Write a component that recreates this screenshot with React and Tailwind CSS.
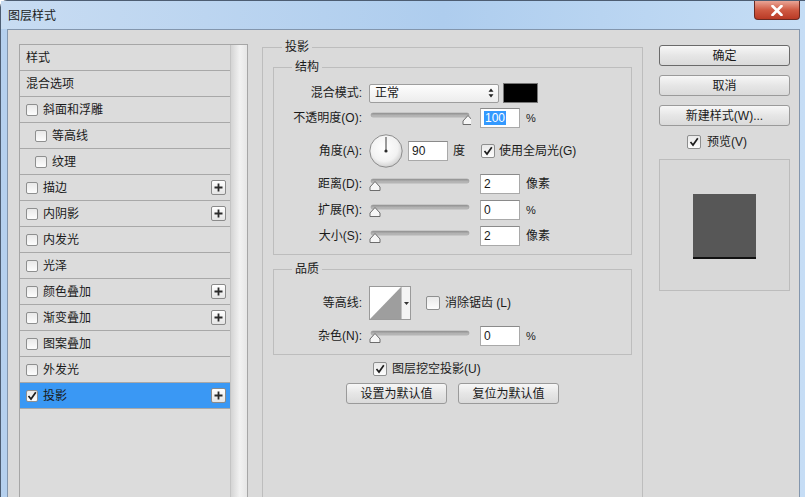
import React from "react"

const rows = [
  { t: "样式" },
  { t: "混合选项" },
  { t: "斜面和浮雕", cb: true },
  { t: "等高线", cb: true, indent: true },
  { t: "纹理", cb: true, indent: true },
  { t: "描边", cb: true, plus: true },
  { t: "内阴影", cb: true, plus: true },
  { t: "内发光", cb: true },
  { t: "光泽", cb: true },
  { t: "颜色叠加", cb: true, plus: true },
  { t: "渐变叠加", cb: true, plus: true },
  { t: "图案叠加", cb: true },
  { t: "外发光", cb: true },
  { t: "投影", cb: true, checked: true, plus: true, sel: true },
]

function Check({ checked, small }) {
  const size = small ? "w-[12px] h-[12px]" : "w-[14px] h-[14px]"
  return (
    <span
      className={`${size} shrink-0 inline-flex items-center justify-center border border-[#8e8f8f] rounded-[2px] bg-[linear-gradient(#e9e9e9,#fdfdfd)]`}
    >
      {checked && (
        <svg width="10" height="10" viewBox="0 0 10 10">
          <path d="M1.5 5 L4 8 L8.8 1.2" stroke="#1d1d1d" strokeWidth="1.7" fill="none" />
        </svg>
      )}
    </span>
  )
}

function Plus() {
  return (
    <span className="w-[15px] h-[15px] flex items-center justify-center border border-[#8a8a8a] rounded-[2px] bg-[linear-gradient(#ffffff,#e4e4e4)]">
      <svg width="9" height="9" viewBox="0 0 9 9">
        <path d="M4.5 0.5 V8.5 M0.5 4.5 H8.5" stroke="#2a2a2a" strokeWidth="1.8" />
      </svg>
    </span>
  )
}

function Slider({ pos }) {
  const cx = pos
  return (
    <svg width="102" height="20" viewBox="0 0 102 20" className="shrink-0">
      <defs>
        <linearGradient id="trk" x1="0" y1="0" x2="0" y2="1">
          <stop offset="0" stopColor="#8f8f8f" />
          <stop offset="1" stopColor="#c8c8c8" />
        </linearGradient>
      </defs>
      <rect x="2" y="5" width="98" height="4" rx="2" fill="url(#trk)" stroke="#9a9a9a" strokeWidth="0.6" />
      <path
        d={`M${cx - 5} 16.5 L${cx + 5} 16.5 L${cx + 5} 13 L${cx} 7.5 L${cx - 5} 13 Z`}
        fill="#f6f6f6"
        stroke="#6c6c6c"
        strokeWidth="1"
        strokeLinejoin="round"
      />
    </svg>
  )
}

function Input({ value, selected }) {
  return (
    <div className="w-[40px] h-[20px] shrink-0 bg-white border border-[#a9a9a9] border-t-[#8a8a8a] flex items-center pl-[3px] text-[12px] text-[#1a1a1a]">
      {selected ? <span className="bg-[#3399ff] text-white px-[1px] leading-[14px]">{value}</span> : value}
    </div>
  )
}

function Btn({ children, w, def }) {
  return (
    <div
      className={`${w} h-[21px] flex items-center justify-center rounded-[3px] border ${
        def ? "border-[#6a6a6a]" : "border-[#9a9a9a]"
      } bg-[linear-gradient(#f7f7f7,#e6e6e6_50%,#dadada)] text-[12px] text-[#1a1a1a]`}
    >
      {children}
    </div>
  )
}

function Label({ children }) {
  return <div className="w-[91px] shrink-0 text-right pr-[3px] text-[12px] text-[#1a1a1a]">{children}</div>
}

export default function App() {
  return (
    <div className="w-[805px] h-[497px] overflow-hidden bg-white font-['Liberation_Sans','Noto_Sans_CJK_SC',sans-serif]">
      <div className="w-[805px] h-[520px] rounded-tl-[7px] border-l border-t border-[#4d5d72] bg-[linear-gradient(to_right,#b5d0ee,#b9d5f3_50%,#c6ddf5)] flex flex-col">
        {/* title bar */}
        <div className="h-[28px] flex items-start justify-between bg-[linear-gradient(to_right,#c8dcf2,#aecdee_55%,#c5ddf5)]">
          <div className="pl-[7px] pt-[6px] text-[12px] text-[#1b1b1b]">图层样式</div>
          <div className="mr-[5px] w-[46px] h-[19px] rounded-b-[4px] border border-t-0 border-[#6b2a22] bg-[linear-gradient(#e9a596,#cf5a43_50%,#b93a25)] flex items-center justify-center">
            <svg width="12" height="11" viewBox="0 0 12 11">
              <path d="M1.5 1 L10.5 10 M10.5 1 L1.5 10" stroke="#ffffff" strokeWidth="2.6" strokeLinecap="round" />
            </svg>
          </div>
        </div>

        {/* body */}
        <div className="ml-[6px] mr-[5px] flex-1 border-t border-l border-r border-[#8396ad] bg-[#dadada] flex items-start">
          {/* left style list */}
          <div className="ml-[11px] mt-[14px] flex border border-[#a6a6a6] h-[470px] bg-[#dcdcdc]">
            <div className="w-[210px] flex flex-col">
              {rows.map((r) => (
                <div
                  key={r.t}
                  className={`h-[26px] shrink-0 border-b border-[#a8a8a8] flex items-center gap-[5px] pr-[4px] ${
                    r.indent ? "pl-[15px]" : "pl-[6px]"
                  } ${r.sel ? "bg-[#3a98f4]" : ""}`}
                >
                  {r.cb && <Check small checked={r.checked} />}
                  <span className="text-[12px] text-[#1a1a1a] flex-1">{r.t}</span>
                  {r.plus && <Plus />}
                </div>
              ))}
            </div>
            <div className="w-[17px] border-l border-[#c4c4c4] bg-[linear-gradient(to_right,#d4d4d4,#f2f2f2_55%,#e6e6e6)]" />
          </div>

          {/* main panel */}
          <fieldset className="ml-[14px] mt-[9px] w-[381px] h-[470px] border border-[#bdbdbd] px-[10px]">
            <legend className="ml-[9px] px-[3px] text-[12px] leading-[16px] text-[#1a1a1a]">投影</legend>

            <fieldset className="mt-[4px] border border-[#bdbdbd] pb-[8px]">
              <legend className="ml-[18px] px-[3px] text-[12px] leading-[16px] text-[#1a1a1a]">结构</legend>
              <div className="flex flex-col">
                <div className="mt-[8px] h-[20px] flex items-center">
                  <Label>混合模式:</Label>
                  <div className="ml-[4px] w-[130px] h-[19px] border border-[#9d9d9d] rounded-[2px] bg-[linear-gradient(#fdfdfd,#ececec)] flex items-center justify-between pl-[5px] pr-[4px] text-[12px] text-[#1a1a1a]">
                    <span>正常</span>
                    <svg width="6" height="10" viewBox="0 0 6 10">
                      <path d="M3 0.5 L5.5 3.8 H0.5 Z M3 9.5 L5.5 6.2 H0.5 Z" fill="#222" />
                    </svg>
                  </div>
                  <div className="ml-[4px] w-[35px] h-[20px] bg-black border border-[#777]" />
                </div>

                <div className="mt-[5px] h-[20px] flex items-center">
                  <Label>不透明度(O):</Label>
                  <div className="ml-[4px]">
                    <Slider pos={99} />
                  </div>
                  <div className="ml-[9px]">
                    <Input value="100" selected />
                  </div>
                  <span className="ml-[6px] text-[11px] text-[#1a1a1a]">%</span>
                </div>

                <div className="mt-[6px] h-[34px] flex items-center">
                  <Label>角度(A):</Label>
                  <svg width="34" height="34" viewBox="0 0 34 34" className="ml-[4px] shrink-0">
                    <defs>
                      <radialGradient id="dial" cx="0.45" cy="0.4" r="0.6">
                        <stop offset="0" stopColor="#ffffff" />
                        <stop offset="0.7" stopColor="#f2f2f2" />
                        <stop offset="1" stopColor="#d0d0d0" />
                      </radialGradient>
                    </defs>
                    <circle cx="17" cy="17" r="16.2" fill="url(#dial)" stroke="#8c8c8c" strokeWidth="1" />
                    <line x1="17" y1="17" x2="17" y2="3" stroke="#3a3a3a" strokeWidth="1" />
                    <circle cx="17" cy="17" r="1.6" fill="#2a2a2a" />
                  </svg>
                  <div className="ml-[5px]">
                    <Input value="90" />
                  </div>
                  <span className="ml-[5px] text-[12px] text-[#1a1a1a]">度</span>
                  <div className="ml-[16px] flex items-center gap-[4px]">
                    <Check checked />
                    <span className="text-[12px] text-[#1a1a1a]">使用全局光(G)</span>
                  </div>
                </div>

                {[
                  ["距离(D):", "2", "像素"],
                  ["扩展(R):", "0", "%"],
                  ["大小(S):", "2", "像素"],
                ].map(([l, v, u]) => (
                  <div key={l} className="mt-[6px] h-[20px] flex items-center">
                    <Label>{l}</Label>
                    <div className="ml-[4px]">
                      <Slider pos={6} />
                    </div>
                    <div className="ml-[9px]">
                      <Input value={v} />
                    </div>
                    <span className={`ml-[6px] ${u === "%" ? "text-[11px]" : "text-[12px]"} text-[#1a1a1a]`}>{u}</span>
                  </div>
                ))}
              </div>
            </fieldset>

            <fieldset className="mt-[6px] border border-[#bdbdbd] pb-[8px]">
              <legend className="ml-[18px] px-[3px] text-[12px] leading-[16px] text-[#1a1a1a]">品质</legend>
              <div className="mt-[9px] h-[34px] flex items-center">
                <Label>等高线:</Label>
                <div className="ml-[4px] w-[42px] h-[34px] border border-[#9a9a9a] bg-white flex">
                  <svg width="31" height="32" viewBox="0 0 31 32">
                    <path d="M0 32 L31 0 L31 32 Z" fill="#9e9e9e" />
                  </svg>
                  <div className="flex-1 border-l border-[#c4c4c4] bg-[#f4f4f4] flex items-center justify-center">
                    <svg width="5" height="3" viewBox="0 0 5 3">
                      <path d="M0 0 H5 L2.5 3 Z" fill="#333" />
                    </svg>
                  </div>
                </div>
                <div className="ml-[15px] flex items-center gap-[5px]">
                  <Check />
                  <span className="text-[12px] text-[#1a1a1a]">消除锯齿 (L)</span>
                </div>
              </div>
              <div className="mt-[6px] h-[20px] flex items-center">
                <Label>杂色(N):</Label>
                <div className="ml-[4px]">
                  <Slider pos={6} />
                </div>
                <div className="ml-[9px]">
                  <Input value="0" />
                </div>
                <span className="ml-[6px] text-[11px] text-[#1a1a1a]">%</span>
              </div>
            </fieldset>

            <div className="mt-[6px] h-[16px] ml-[100px] flex items-center gap-[5px]">
              <Check checked />
              <span className="text-[12px] text-[#1a1a1a]">图层挖空投影(U)</span>
            </div>
            <div className="mt-[6px] flex justify-center gap-[11px]">
              <Btn w="w-[101px]">设置为默认值</Btn>
              <Btn w="w-[101px]">复位为默认值</Btn>
            </div>
          </fieldset>

          {/* right panel */}
          <div className="ml-[16px] mt-[15px] w-[131px] flex flex-col">
            <Btn w="w-[131px]" def>确定</Btn>
            <div className="mt-[9px]">
              <Btn w="w-[131px]">取消</Btn>
            </div>
            <div className="mt-[9px]">
              <Btn w="w-[131px]">新建样式(W)...</Btn>
            </div>
            <div className="mt-[8px] h-[16px] pl-[28px] flex items-center gap-[6px]">
              <Check checked />
              <span className="text-[12px] text-[#1a1a1a]">预览(V)</span>
            </div>
            <div className="mt-[9px] w-[131px] h-[132px] border border-[#bcbcbc] bg-[#d8d8d8] flex items-center justify-center">
              <div className="w-[63px] h-[63px] bg-[#575757] shadow-[0_2px_0_#111]" />
            </div>
          </div>
        </div>
      </div>
    </div>
  )
}
